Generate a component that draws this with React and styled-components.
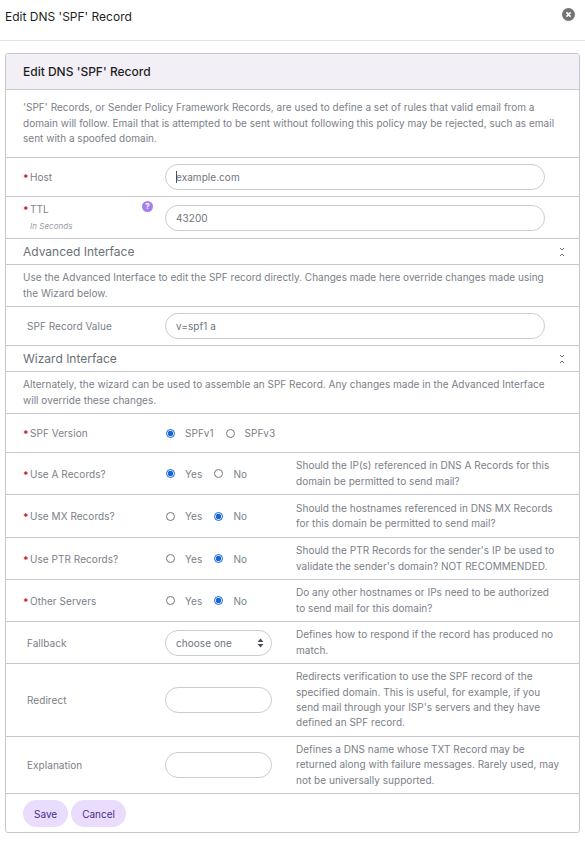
import React from 'react';
import styled, { createGlobalStyle } from 'styled-components';

const GlobalStyle = createGlobalStyle`
  html, body {
    margin: 0;
    padding: 0;
    background: #fff;
    font-family: Inter, "Liberation Sans", sans-serif;
  }
`;

const choiceRows = [
  {
    label: 'Use A Records?',
    value: 'Yes',
    height: 42,
    help: 'Should the IP(s) referenced in DNS A Records for this domain be permitted to send mail?',
  },
  {
    label: 'Use MX Records?',
    value: 'No',
    height: 43,
    help: 'Should the hostnames referenced in DNS MX Records for this domain be permitted to send mail?',
  },
  {
    label: 'Use PTR Records?',
    value: 'No',
    height: 42,
    help: "Should the PTR Records for the sender's IP be used to validate the sender's domain? NOT RECOMMENDED.",
  },
  {
    label: 'Other Servers',
    value: 'No',
    height: 42,
    help: 'Do any other hostnames or IPs need to be authorized to send mail for this domain?',
  },
];

const Radio = ({ name, label, checked }) => (
  <RadioLabel>
    <RadioInput type="radio" name={name} defaultChecked={checked} />
    {label}
  </RadioLabel>
);

const ToggleIcon = () => (
  <svg width="6" height="10" viewBox="0 0 6 10" fill="none" stroke="#6a7078" strokeWidth="1">
    <path d="M1 1l2 2 2-2M1 9l2-2 2 2" />
  </svg>
);

const App = () => (
  <>
    <GlobalStyle />
    <Page>
      <ModalHeader>
        <ModalTitle>Edit DNS 'SPF' Record</ModalTitle>
        <CloseButton aria-label="Close">
          <svg width="13" height="13" viewBox="0 0 13 13">
            <circle cx="6.5" cy="6.5" r="6.5" fill="#737373" />
            <path d="M4.4 4.4l4.2 4.2M8.6 4.4l-4.2 4.2" stroke="#fff" strokeWidth="1.6" />
          </svg>
        </CloseButton>
      </ModalHeader>

      <Card>
        <CardTitle>Edit DNS 'SPF' Record</CardTitle>
        <Note $height={68}>
          <span>
            'SPF' Records, or Sender Policy Framework Records, are used to define a set of rules that
            valid email from a domain will follow. Email that is attempted to be sent without following
            this policy may be rejected, such as email sent with a spoofed domain.
          </span>
        </Note>

        <Row $height={39}>
          <Label $required>Host</Label>
          <CaretField>
            <TextInput $wide defaultValue="example.com" />
          </CaretField>
        </Row>
        <Row $height={42}>
          <Label $required>
            TTL
            <SubLabel>In Seconds</SubLabel>
          </Label>
          <HelpBadge>?</HelpBadge>
          <TextInput $wide defaultValue="43200" />
        </Row>

        <Section>
          Advanced Interface
          <ToggleIcon />
        </Section>
        <Note $height={42}>
          <span>
            Use the Advanced Interface to edit the SPF record directly. Changes made here override
            changes made using the Wizard below.
          </span>
        </Note>
        <Row $height={39}>
          <Label>SPF Record Value</Label>
          <TextInput $wide defaultValue="v=spf1 a" />
        </Row>

        <Section>
          Wizard Interface
          <ToggleIcon />
        </Section>
        <Note $height={42}>
          <span>
            Alternately, the wizard can be used to assemble an SPF Record. Any changes made in the
            Advanced Interface will override these changes.
          </span>
        </Note>

        <Row $height={39}>
          <Label $required>SPF Version</Label>
          <RadioGroup>
            <Radio name="version" label="SPFv1" checked />
            <Radio name="version" label="SPFv3" />
          </RadioGroup>
        </Row>

        {choiceRows.map(row => (
          <Row key={row.label} $height={row.height}>
            <Label $required>{row.label}</Label>
            <RadioGroup>
              <Radio name={row.label} label="Yes" checked={row.value === 'Yes'} />
              <Radio name={row.label} label="No" checked={row.value === 'No'} />
            </RadioGroup>
            <Help>{row.help}</Help>
          </Row>
        ))}

        <Row $height={42}>
          <Label>Fallback</Label>
          <SelectBox>
            choose one
            <svg width="7" height="10" viewBox="0 0 7 10" fill="#4a5058">
              <path d="M3.5 0.5L6.5 4H0.5zM3.5 9.5L0.5 6H6.5z" />
            </svg>
          </SelectBox>
          <Help>Defines how to respond if the record has produced no match.</Help>
        </Row>
        <Row $height={73}>
          <Label>Redirect</Label>
          <TextInput />
          <Help>
            Redirects verification to use the SPF record of the specified domain. This is useful, for
            example, if you send mail through your ISP's servers and they have defined an SPF record.
          </Help>
        </Row>
        <Row $height={57}>
          <Label>Explanation</Label>
          <TextInput />
          <Help>
            Defines a DNS name whose TXT Record may be returned along with failure messages. Rarely
            used, may not be universally supported.
          </Help>
        </Row>

        <Footer>
          <Button>Save</Button>
          <Button>Cancel</Button>
        </Footer>
      </Card>
    </Page>
  </>
);

const Page = styled.div`
  width: 585px;
  height: 846px;
  overflow: hidden;
  background: #fff;
`;

const ModalHeader = styled.header`
  display: flex;
  justify-content: space-between;
  align-items: flex-start;
  box-sizing: border-box;
  height: 41px;
  padding: 8px 10px 0 5px;
  border-bottom: 1px solid #e3e3e6;
`;

const ModalTitle = styled.h1`
  margin: 0;
  font-size: 12px;
  font-weight: 400;
  line-height: 18px;
  color: #1d1f24;
`;

const CloseButton = styled.button`
  display: flex;
  padding: 0;
  border: none;
  background: none;
`;

const Card = styled.section`
  box-sizing: border-box;
  margin: 12px 5px 0;
  border: 1px solid #c9c6cf;
  border-radius: 3px;
  overflow: hidden;
`;

const CardTitle = styled.h2`
  box-sizing: border-box;
  height: 36px;
  margin: 0;
  padding: 0 17px;
  border-bottom: 1px solid #c9c6cf;
  background: #f3eff7;
  font-size: 12px;
  font-weight: 500;
  line-height: 35px;
  color: #1d1f24;
`;

const Note = styled.p`
  display: flex;
  align-items: center;
  box-sizing: border-box;
  height: ${props => props.$height}px;
  margin: 0;
  padding: 0 22px 0 17px;
  border-bottom: 1px solid #c9c6cf;
  font-size: 10px;
  letter-spacing: 0.02px;
  line-height: 15.4px;
  color: #7b8088;
`;

const Row = styled.div`
  display: grid;
  grid-template-columns: 142px 1fr;
  position: relative;
  align-items: center;
  box-sizing: border-box;
  height: ${props => props.$height}px;
  padding-left: 17px;
  border-bottom: 1px solid #c9c6cf;

  &:has(> p) {
    grid-template-columns: 142px 131px 1fr;
  }
`;

const Label = styled.div`
  position: relative;
  padding-left: ${props => (props.$required ? '7px' : '4px')};
  font-size: 10px;
  letter-spacing: 0.05px;
  line-height: 14px;
  color: #7b8088;

  &::before {
    content: ${props => (props.$required ? "'*'" : 'none')};
    position: absolute;
    left: 0;
    top: 1px;
    color: #c0202c;
    font-weight: 700;
  }
`;

const SubLabel = styled.small`
  display: block;
  margin-top: 3px;
  font-size: 8px;
  font-style: italic;
  color: #989ca3;
`;

const HelpBadge = styled.span`
  position: absolute;
  left: 136px;
  top: 4px;
  width: 11px;
  height: 11px;
  border-radius: 50%;
  background: #a47ff0;
  color: #fff;
  font-size: 8px;
  font-weight: 700;
  line-height: 11px;
  text-align: center;
`;

const CaretField = styled.div`
  display: flex;
  position: relative;

  &::after {
    content: '';
    position: absolute;
    left: 11px;
    top: 7px;
    width: 1px;
    height: 12px;
    background: #4a5058;
  }
`;

const TextInput = styled.input`
  box-sizing: border-box;
  width: ${props => (props.$wide ? '380px' : '107px')};
  height: 26px;
  padding: 0 10px;
  border: 1px solid #c9ccd1;
  border-radius: 13px;
  outline: none;
  background: #fff;
  font-family: inherit;
  font-size: 10px;
  letter-spacing: 0.05px;
  color: #70757d;
`;

const SelectBox = styled.div`
  display: flex;
  justify-content: space-between;
  align-items: center;
  box-sizing: border-box;
  width: 107px;
  height: 26px;
  padding: 0 7px 0 10px;
  border: 1px solid #c9ccd1;
  border-radius: 13px;
  font-size: 10px;
  letter-spacing: 0.05px;
  color: #70757d;
`;

const RadioGroup = styled.div`
  display: flex;
  gap: 11px;
`;

const RadioLabel = styled.label`
  display: flex;
  align-items: center;
  gap: 10px;
  font-size: 10px;
  letter-spacing: 0.1px;
  color: #7b8088;
`;

const RadioInput = styled.input`
  width: 9px;
  height: 9px;
  margin: 0 0 0 1px;
  accent-color: #1666d8;
`;

const Help = styled.p`
  margin: 0;
  padding-right: 19px;
  font-size: 10px;
  letter-spacing: 0.03px;
  line-height: 15.3px;
  color: #7b8088;
`;

const Section = styled.h3`
  display: flex;
  justify-content: space-between;
  align-items: center;
  box-sizing: border-box;
  height: 26px;
  margin: 0;
  padding: 0 14px 0 17px;
  border-bottom: 1px solid #c9c6cf;
  font-size: 12px;
  font-weight: 400;
  color: #6a7078;
`;

const Footer = styled.div`
  display: flex;
  gap: 3px;
  padding: 6px 17px 5px;
`;

const Button = styled.button`
  height: 27px;
  padding: 0 11px;
  border: none;
  border-radius: 14px;
  background: #e9dcfc;
  font-family: inherit;
  font-size: 10px;
  color: #46308a;
`;

export default App;
